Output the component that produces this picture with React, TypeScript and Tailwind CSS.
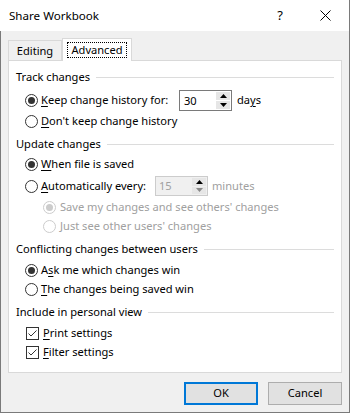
import React from "react";

const font = { fontFamily: '"Segoe UI", "Noto Sans", "Liberation Sans", sans-serif' };

function U({ children }: { children: React.ReactNode }) {
  return <span className="underline underline-offset-2">{children}</span>;
}

function Radio({ checked, disabled }: { checked?: boolean; disabled?: boolean }) {
  const c = disabled ? "#cccccc" : "#333333";
  return (
    <svg width="13" height="13" viewBox="0 0 13 13" className="shrink-0">
      <circle cx="6.5" cy="6.5" r="6" fill="#ffffff" stroke={c} strokeWidth="1" />
      {checked && <circle cx="6.5" cy="6.5" r="3.5" fill={c} />}
    </svg>
  );
}

function Check() {
  return (
    <svg width="13" height="13" viewBox="0 0 13 13" className="shrink-0">
      <rect x="0.5" y="0.5" width="12" height="12" fill="#ffffff" stroke="#333333" />
      <path d="M2.5 6.5 L5 9 L10.5 3.5" fill="none" stroke="#333333" strokeWidth="1" />
    </svg>
  );
}

function Spin({ value, disabled }: { value: string; disabled?: boolean }) {
  return (
    <div
      className={
        disabled
          ? "flex h-[20px] w-[53px] shrink-0 border border-[#cccccc] bg-[#f0f0f0]"
          : "flex h-[21px] w-[53px] shrink-0 border border-[#7a7a7a] bg-white"
      }
    >
      <div className={disabled ? "flex-1 pl-[3px] leading-[18px] text-[#a0a0a0]" : "flex-1 pl-[4px] leading-[19px]"}>
        {value}
      </div>
      <div className="flex w-[16px] flex-col gap-px p-px">
        <div className="flex flex-1 items-center justify-center bg-[#e6e6e6]">
          <svg width="7" height="4" viewBox="0 0 7 4">
            <path d="M0 4 L3.5 0 L7 4 Z" fill="#000000" />
          </svg>
        </div>
        <div className="flex flex-1 items-center justify-center bg-[#e6e6e6]">
          <svg width="7" height="4" viewBox="0 0 7 4">
            <path d="M0 0 L3.5 4 L7 0 Z" fill={disabled ? "#888888" : "#000000"} />
          </svg>
        </div>
      </div>
    </div>
  );
}

function Header({ label, h }: { label: string; h: string }) {
  return (
    <div className={`${h} pl-[7px] pr-[7px]`}>
      <div className="flex h-[20px] items-center gap-[6px]">
        <span className="whitespace-nowrap">{label}</span>
        <div className="h-px flex-1 bg-[#dcdcdc]" />
      </div>
    </div>
  );
}

function Row({ h, indent, children }: { h: string; indent: string; children: React.ReactNode }) {
  return (
    <div className={`${h} ${indent}`}>
      <div className="flex h-[20px] items-center whitespace-nowrap">{children}</div>
    </div>
  );
}

export default function App() {
  return (
    <div style={font} className="h-[413px] w-[350px] bg-white text-[11.1px] text-black">
      <div className="flex h-[413px] w-[350px] flex-col border-r border-b border-[#7a7a7a]">
        <div className="flex h-[31px] items-center bg-white">
          <span className="pl-[9px] text-[11.6px]">Share Workbook</span>
          <span className="ml-auto mr-[37px] text-[13px]">?</span>
          <svg width="11" height="11" viewBox="0 0 11 11" className="mr-[18px]">
            <path d="M0.5 0.5 L10.5 10.5 M10.5 0.5 L0.5 10.5" stroke="#000000" strokeWidth="1" />
          </svg>
        </div>
        <div className="flex flex-1 flex-col border-l border-[#7a7a7a] bg-[#f0f0f0]">
          <div className="ml-[7px] mt-[7px] flex h-[22px] items-end">
            <div className="flex h-[20px] w-[54px] items-center justify-center border border-b-0 border-[#d9d9d9] bg-[#f0f0f0] pt-[2px]">
              Editing
            </div>
            <div className="relative z-10 -mb-px flex h-[23px] w-[70px] items-center justify-center border border-b-0 border-[#d9d9d9] bg-white">
              <span className="border border-dotted border-black px-[3px] leading-[14px]">Advanced</span>
            </div>
          </div>
          <div className="ml-[7px] h-[313px] w-[334px] border border-[#d9d9d9] bg-white pt-[6px]">
            <Header label="Track changes" h="h-[23px]" />
            <Row h="h-[21px]" indent="pl-[16px]">
              <Radio checked />
              <span className="ml-[3px] w-[138px]">
                <U>K</U>eep change history for:
              </span>
              <Spin value="30" />
              <span className="ml-[5px]">
                da<U>y</U>s
              </span>
            </Row>
            <Row h="h-[23px]" indent="pl-[16px]">
              <Radio />
              <span className="ml-[3px]">
                <U>D</U>on't keep change history
              </span>
            </Row>
            <Header label="Update changes" h="h-[20px]" />
            <Row h="h-[22px]" indent="pl-[16px]">
              <Radio checked />
              <span className="ml-[3px]">
                <U>W</U>hen file is saved
              </span>
            </Row>
            <Row h="h-[21px]" indent="pl-[16px]">
              <Radio />
              <span className="ml-[3px] w-[114px]">
                <U>A</U>utomatically every:
              </span>
              <Spin value="15" disabled />
              <span className="ml-[4px] text-[#a0a0a0]">minutes</span>
            </Row>
            <Row h="h-[19px]" indent="pl-[34px]">
              <Radio checked disabled />
              <span className="ml-[4px] text-[#a0a0a0]">Save my changes and see others' changes</span>
            </Row>
            <Row h="h-[23px]" indent="pl-[34px]">
              <Radio disabled />
              <span className="ml-[4px] text-[#a0a0a0]">Just see other users' changes</span>
            </Row>
            <Header label="Conflicting changes between users" h="h-[21px]" />
            <Row h="h-[19px]" indent="pl-[16px]">
              <Radio checked />
              <span className="ml-[3px]">
                A<U>s</U>k me which changes win
              </span>
            </Row>
            <Row h="h-[23px]" indent="pl-[16px]">
              <Radio />
              <span className="ml-[3px]">
                <U>T</U>he changes being saved win
              </span>
            </Row>
            <Header label="Include in personal view" h="h-[21px]" />
            <Row h="h-[19px]" indent="pl-[17px]">
              <Check />
              <span className="ml-[4px]">
                <U>P</U>rint settings
              </span>
            </Row>
            <Row h="h-[20px]" indent="pl-[17px]">
              <Check />
              <span className="ml-[4px]">
                <U>F</U>ilter settings
              </span>
            </Row>
          </div>
          <div className="mt-[9px] flex justify-end gap-[10px] pr-[7px]">
            <button className="h-[23px] w-[74px] border-2 border-[#0078d7] bg-[#e1e1e1]">OK</button>
            <button className="h-[23px] w-[74px] border border-[#adadad] bg-[#e1e1e1]">Cancel</button>
          </div>
        </div>
      </div>
    </div>
  );
}
